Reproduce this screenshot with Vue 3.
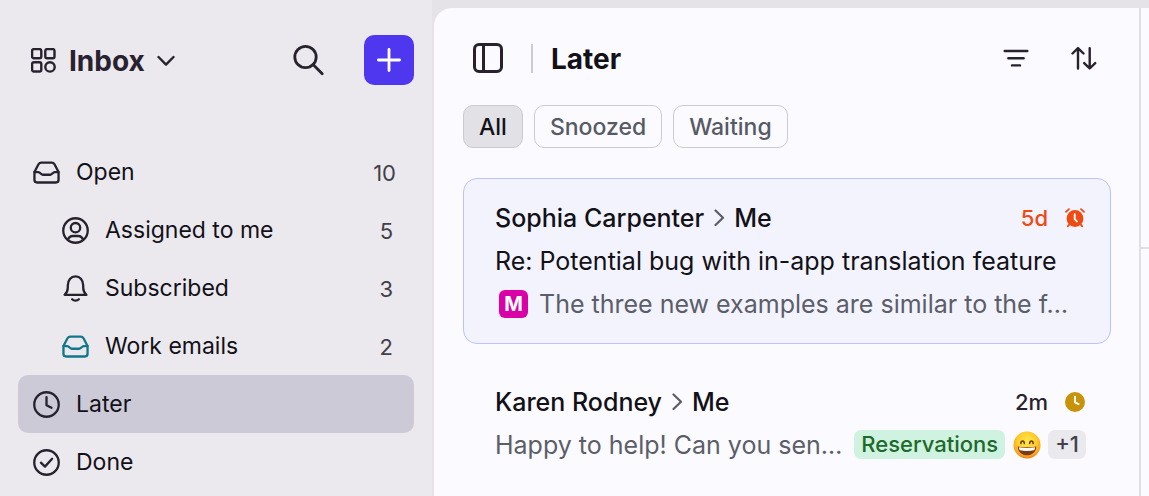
<script setup>
import { ref } from 'vue'

const folders = [
  { name: 'Open', icon: 'inbox', count: 10 },
  { name: 'Assigned to me', icon: 'user', count: 5, nested: true },
  { name: 'Subscribed', icon: 'bell', count: 3, nested: true },
  { name: 'Work emails', icon: 'inbox', count: 2, nested: true, teal: true },
  { name: 'Later', icon: 'clock' },
  { name: 'Done', icon: 'check' }
]
const activeFolder = ref('Later')

const filters = ['All', 'Snoozed', 'Waiting']
const activeFilter = ref('All')
</script>

<template>
  <div class="app">
    <aside class="sidebar">
      <header class="side-head">
        <button class="switcher" type="button">
          <svg class="grid-icon" viewBox="0 0 26 26" aria-hidden="true">
            <rect x="1.1" y="1.1" width="9.2" height="9.2" rx="1.8" />
            <rect x="14.3" y="1.1" width="9.2" height="9.2" rx="1.8" />
            <rect x="1.1" y="14.3" width="9.2" height="9.2" rx="1.8" />
            <circle cx="19" cy="18.9" r="4.7" />
          </svg>
          <span class="switcher-name">Inbox</span>
          <svg class="caret" viewBox="0 0 18 12" aria-hidden="true"><path d="M1.5 2 9 9.6 16.5 2" /></svg>
        </button>
        <button class="search" type="button" aria-label="Search">
          <svg viewBox="0 0 32 32" aria-hidden="true"><circle cx="13.5" cy="13" r="10.7" /><path d="m21.3 20.8 8.900 8.900" /></svg>
        </button>
        <button class="compose" type="button" aria-label="New message">
          <svg viewBox="0 0 26 26" aria-hidden="true"><path d="M13 2.4v21.2M2.4 13h21.2" /></svg>
        </button>
      </header>

      <nav class="folders">
        <a
          v-for="f in folders"
          :key="f.name"
          href="#"
          class="folder"
          :class="{ nested: f.nested, teal: f.teal, active: f.name === activeFolder }"
          @click.prevent="activeFolder = f.name"
        >
          <svg class="folder-icon" viewBox="0 0 28 28" aria-hidden="true">
            <g v-if="f.icon === 'inbox'">
              <path d="M1.5 13.5 5.7 5.5Q6.700 3.700 8.600 3.700h10.800q1.900 0 2.900 1.800l4.200 8v8.100q0 2.800-2.800 2.800H4.300q-2.800 0-2.800-2.800Z" />
              <path d="M1.5 13.6h4.2c1.7 0 2.2 2.7 4.4 2.7h7.800c2.200 0 2.700-2.700 4.400-2.700h4.200" />
            </g>
            <g v-else-if="f.icon === 'user'">
              <circle cx="14" cy="14" r="12.7" />
              <circle cx="14" cy="11.1" r="4.9" />
              <path d="M6.2 23.6c.9-2.7 2.4-3.9 4.900-3.900h5.800c2.500 0 4 1.200 4.900 3.900" />
            </g>
            <g v-else-if="f.icon === 'bell'">
              <path d="M2.7 20.6c2-1.800 3.300-4.200 3.300-7.400v-2.400C6 5.400 9.200 1.500 14 1.500s8 3.900 8 9.300v2.400c0 3.200 1.300 5.600 3.300 7.400Z" />
              <path d="M10.5 25.2c1.7 1.8 5.3 1.8 7 0" />
            </g>
            <g v-else>
              <circle cx="14" cy="14" r="12.7" />
              <path v-if="f.icon === 'clock'" d="M14 6.3v8.4l5.2 2.6" />
              <path v-else d="m8.2 14.2 4.2 4.1 7.4-8.2" />
            </g>
          </svg>
          <span class="folder-name">{{ f.name }}</span>
          <span v-if="f.count" class="count">{{ f.count }}</span>
        </a>
      </nav>
    </aside>

    <main class="list">
      <header class="list-head">
        <button class="toggle" type="button" aria-label="Toggle sidebar">
          <svg viewBox="0 0 30 30" aria-hidden="true"><rect x="1.5" y="1.5" width="27" height="27" rx="4.5" /><path d="M10.5 1.5v27" /></svg>
        </button>
        <span class="divider"></span>
        <h1>Later</h1>
        <button class="tool" type="button" aria-label="Filter">
          <svg viewBox="0 0 26 26" aria-hidden="true"><path d="M1.7 6h22.6M5.3 13.2h15.4M9 20.4h8" /></svg>
        </button>
        <button class="tool" type="button" aria-label="Sort">
          <svg viewBox="0 0 26 26" aria-hidden="true"><path d="M7 23.6V3.3M1.5 8.5 7 3.1l5.500 5.400M18.700 3.100v20.200M13.200 18.100l5.500 5.400 5.500-5.400" /></svg>
        </button>
      </header>

      <div class="filters">
        <button
          v-for="name in filters"
          :key="name"
          type="button"
          class="chip"
          :class="{ on: name === activeFilter }"
          @click="activeFilter = name"
        >{{ name }}</button>
      </div>

      <article class="mail selected">
        <div class="line people">
          <span>Sophia Carpenter</span>
          <svg class="to" viewBox="0 0 12 18" aria-hidden="true"><path d="m2.500 1.500 7.500 7.200-7.500 7.300" /></svg>
          <span>Me</span>
          <span class="age late">5d</span>
          <svg class="state" viewBox="0 0 20 20" aria-hidden="true">
            <circle cx="10" cy="10.5" r="8.4" fill="#f04a14" />
            <path d="M1 3.8 4 1.1M19 3.8l-3-2.7M4.6 16.2l-1.8 2.1M15.4 16.2l1.8 2.1" stroke="#f04a14" stroke-width="1.8" />
            <path d="M9.7 6.2v5l2.2 2.2" stroke="#fff" stroke-width="1.9" />
          </svg>
        </div>
        <div class="line subject">Re: Potential bug with in-app translation feature</div>
        <div class="line">
          <span class="avatar">M</span>
          <span class="preview">The three new examples are similar to the f…</span>
        </div>
      </article>

      <article class="mail">
        <div class="line people">
          <span>Karen Rodney</span>
          <svg class="to" viewBox="0 0 12 18" aria-hidden="true"><path d="m2.500 1.500 7.500 7.200-7.500 7.300" /></svg>
          <span>Me</span>
          <span class="age">2m</span>
          <svg class="state" viewBox="0 0 20 20" aria-hidden="true">
            <circle cx="10" cy="10" r="10" fill="#c8930a" />
            <path d="M10 4.8v5.6l3.6 1.8" stroke="#fff" stroke-width="1.9" />
          </svg>
        </div>
        <div class="line">
          <span class="preview">Happy to help! Can you sen…</span>
          <span class="tag green">Reservations</span>
          <svg class="emoji" viewBox="0 0 28 28" role="img" aria-label="Grinning face">
            <defs>
              <radialGradient id="face" cx="50%" cy="38%" r="62%">
                <stop offset="0" stop-color="#ffe94a" />
                <stop offset=".55" stop-color="#ffcf2e" />
                <stop offset=".85" stop-color="#fba51e" />
                <stop offset="1" stop-color="#ee7a12" />
              </radialGradient>
            </defs>
            <circle cx="14" cy="14" r="13.5" fill="url(#face)" />
            <path d="M7.8 12.6c.2-3.4 3.3-3.4 3.6 0M16.600 12.600c.3-3.4 3.400-3.400 3.600 0" stroke="#6b3a10" stroke-width="1.5" />
            <path d="M4.8 15.4c6 1.2 12.4 1.2 18.4 0 .2 5-3.900 8.800-9.200 8.800s-9.400-3.800-9.200-8.800Z" fill="#7c3b16" />
            <path d="M5.9 16.3c5.4 1 10.8 1 16.2 0-.1 1.500-.5 2.300-1 3-4.500.8-9.700.8-14.200 0-.5-.7-.9-1.500-1-3Z" fill="#fff" />
          </svg>
          <span class="tag grey">+1</span>
        </div>
      </article>
    </main>

    <section class="detail"><div class="detail-head"></div></section>
  </div>
</template>

<style>
body { background: #ebe8ee; }
</style>

<style scoped>
* { box-sizing: border-box; }
.app {
  display: grid;
  grid-template-columns: 434px minmax(0, 1fr) 10px;
  min-height: 100vh;
  padding-top: 8px;
  background: #e5e2e8;
  font-family: Inter, "Noto Sans", sans-serif;
  font-size: 23px;
  line-height: 32px;
  color: #121118;
}
button {
  display: flex;
  align-items: center;
  justify-content: center;
  padding: 0;
  border: 0;
  background: none;
  color: inherit;
  font: inherit;
  cursor: pointer;
}
svg {
  flex: none;
  display: block;
  fill: none;
  stroke: none;
  stroke-linecap: round;
  stroke-linejoin: round;
}
button svg, .folder-icon { stroke: #28222f; stroke-width: 2.4; }

.sidebar {
  margin-top: -8px;
  padding: 35px 18px 0;
  border-right: 2px solid #e5e2e8;
  background: #ebe8ee;
}
.side-head { display: flex; align-items: center; height: 50px; padding-left: 13px; }
.switcher { gap: 12px; margin-right: auto; padding-top: 2px; color: #28222f; }
.grid-icon { width: 26px; height: 26px; }
.switcher-name { font-size: 28px; font-weight: 700; }
.caret { width: 18px; height: 12px; }
.search { width: 32px; margin-right: 40px; }
.search svg { width: 32px; height: 32px; stroke-width: 2.8; }
.compose { width: 50px; height: 50px; border-radius: 10px; background: #4f37f0; }
.compose svg { width: 26px; height: 26px; stroke: #fff; stroke-width: 2.8; }

.folders { margin-top: 58px; }
.folder {
  display: flex;
  align-items: center;
  gap: 16px;
  height: 58px;
  padding: 0 18px 0 15px;
  border-radius: 10px;
  color: inherit;
  text-decoration: none;
}
.folder.nested { padding: 0 21px 0 44px; }
.folder.active { background: #cbcad6; }
.folder-icon { width: 27px; height: 27px; }
.teal .folder-icon { stroke: #11788a; }
.folder-name { flex: 1; }
.count { padding-top: 2px; font-size: 22px; color: #424049; }

.list {
  min-width: 0;
  padding: 20px 28px 0 29px;
  border-top-left-radius: 18px;
  background: #fbfaff;
}
.list-head { display: flex; align-items: center; height: 60px; padding: 0 14px 0 10px; }
.toggle svg { width: 30px; height: 30px; stroke-width: 3; }
.divider { width: 2px; height: 29px; margin: 0 18px 0 28px; background: #cdccd3; }
h1 { flex: 1; margin: 0; padding-top: 2px; font-size: 28px; font-weight: 700; }
.tool + .tool { margin-left: 42px; }
.tool svg { width: 26px; height: 26px; }

.filters { display: flex; gap: 11px; margin: 17px 0 30px; }
.chip {
  height: 43px;
  padding: 0 15px;
  border: 1px solid #cccbd2;
  border-radius: 10px;
  font-weight: 500;
  color: #565a66;
}
.chip.on { background: #e2e1e6; color: #121118; }

.mail {
  margin-bottom: 18px;
  padding: 17px 24px 18px 31px;
  border: 1px solid transparent;
  border-radius: 14px;
  font-size: 25px;
}
.mail.selected { border-color: #bcc3fa; background: #f3f3fd; }
.line { display: flex; align-items: center; height: 43px; white-space: nowrap; }
.people { padding-right: 1px; font-weight: 500; }
.to { width: 12px; height: 18px; margin: 0 9px; stroke: #5c5d68; stroke-width: 2.2; }
.age { margin-left: auto; font-size: 22px; color: #28222f; }
.age.late { color: #f04a14; }
.state { width: 20px; height: 20px; margin-left: 17px; }
.avatar {
  flex: none;
  width: 29px;
  height: 28px;
  margin: 0 11px 0 4px;
  border-radius: 6px;
  background: #d900a8;
  color: #fff;
  font-size: 20px;
  font-weight: 700;
  line-height: 28px;
  text-align: center;
}
.preview { flex: 1; min-width: 0; overflow: hidden; text-overflow: ellipsis; color: #5b5e69; }
.tag { height: 29px; padding: 0 7px; border-radius: 7px; font-size: 22px; font-weight: 500; line-height: 29px; }
.green { background: #d0f2e0; color: #1d6b2b; }
.grey { background: #eae9ee; color: #424049; }
.emoji { width: 28px; height: 28px; margin: 0 7px 0 8px; }

.detail { border-left: 2px solid #e0dfe5; background: #fbfaff; }
.detail-head { height: 241px; border-bottom: 2px solid #e0dfe5; }
</style>
